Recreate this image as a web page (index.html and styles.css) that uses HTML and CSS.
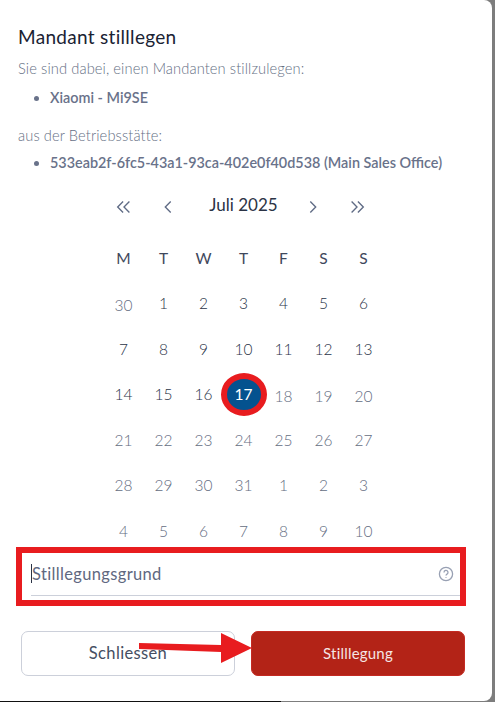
FILE: index.html
```html
<!DOCTYPE html>
<html lang="de">
<head>
  <meta charset="UTF-8" />
  <title>Mandant stilllegen</title>
  <link rel="stylesheet" href="styles.css">
</head>
<body>

<div class="dialog">
  <h2 class="title">Mandant stilllegen</h2>
  <p class="intro">Sie sind dabei, einen Mandanten stillzulegen:</p>
  <ul class="items items-first">
    <li>Xiaomi - Mi9SE</li>
  </ul>
  <p class="intro">aus der Betriebsstätte:</p>
  <ul class="items">
    <li>533eab2f-6fc5-43a1-93ca-402e0f40d538 (Main Sales Office)</li>
  </ul>

  <div class="calendar">
    <div class="cal-head">
      <svg class="nav" viewBox="0 0 20 20"><path d="M9 4 3 10l6 6M16 4l-6 6 6 6"/></svg>
      <svg class="nav" viewBox="0 0 20 20"><path d="M13 4 7 10l6 6"/></svg>
      <span class="month">Juli 2025</span>
      <svg class="nav" viewBox="0 0 20 20"><path d="m7 4 6 6-6 6"/></svg>
      <svg class="nav" viewBox="0 0 20 20"><path d="m4 4 6 6-6 6M11 4l6 6-6 6"/></svg>
    </div>
    <div class="cal-grid">
      <span class="wd">M</span><span class="wd">T</span><span class="wd">W</span><span class="wd">T</span><span class="wd">F</span><span class="wd">S</span><span class="wd">S</span>

      <span class="off low">30</span><span>1</span><span>2</span><span>3</span><span>4</span><span>5</span><span>6</span>
      <span>7</span><span>8</span><span>9</span><span>10</span><span>11</span><span>12</span><span>13</span>
      <span>14</span><span>15</span><span>16</span><span class="today"><b>17</b></span><span class="off low">18</span><span class="off low">19</span><span class="off low">20</span>
      <span class="off">21</span><span class="off">22</span><span class="off">23</span><span class="off">24</span><span class="off">25</span><span class="off">26</span><span class="off">27</span>
      <span class="off">28</span><span class="off">29</span><span class="off">30</span><span class="off">31</span><span class="off">1</span><span class="off">2</span><span class="off">3</span>
      <span class="off">4</span><span class="off">5</span><span class="off">6</span><span class="off">7</span><span class="off">8</span><span class="off">9</span><span class="off">10</span>
    </div>
  </div>

  <div class="reason">
    <div class="reason-line">
      <span class="caret"></span>
      <span class="reason-label">Stilllegungsgrund</span>
      <svg class="help" viewBox="0 0 16 16"><circle cx="8" cy="8" r="6.6"/><path d="M6 6.4a2 2 0 1 1 3 1.7c-.7.4-1 .8-1 1.5"/><path d="M8 11.3v.6"/></svg>
    </div>
  </div>

  <div class="buttons">
    <button class="btn btn-close">Schliessen</button>
    <button class="btn btn-main">Stilllegung</button>
  </div>

  <svg class="arrow" viewBox="0 0 113 30"><path d="M0 10 82 12V0l31 15-31 15V19L0 16z"/></svg>
</div>
<div class="edge"></div>

</body>
</html>
```

FILE: styles.css
```css
html, body {
  height: 100%;
}

body {
  margin: 0;
  background: #7d7d7d;
  font-family: "Lato", "Open Sans", sans-serif;
  overflow: hidden;
}

.dialog {
  position: relative;
  box-sizing: border-box;
  width: 492px;
  height: 701px;
  padding: 25px 19px 0 18px;
  background: #fff;
  border-radius: 0 8px 8px 0;
}

.edge {
  width: 281px;
  height: 1px;
  background: #111;
}

.title {
  margin: 0;
  font-size: 19px;
  line-height: 23px;
  font-weight: 400;
  color: #1a2233;
  letter-spacing: 0.3px;
}

.intro {
  margin: 10px 0 0;
  font-size: 14.7px;
  line-height: 18px;
  font-weight: 300;
  color: #667085;
  letter-spacing: 0.1px;
}

.title + .intro {
  margin-top: 11px;
}

.items {
  margin: 0;
  padding: 10px 0 9px 32px;
  font-size: 14.4px;
  line-height: 18px;
  font-weight: 600;
  color: #69728a;
}

.items-first {
  padding-top: 12px;
}

.calendar {
  margin-top: 9px;
}

.cal-head {
  display: grid;
  grid-template-columns: 44px 44px 101px 44px 44px;
  justify-content: center;
  justify-items: center;
  align-items: center;
  height: 28px;
  margin-left: -10px;
}

.nav {
  width: 18px;
  height: 18px;
  margin-top: 5px;
  fill: none;
  stroke: #5f6b85;
  stroke-width: 1.5;
}

.month {
  padding-left: 6px;
  font-size: 17px;
  color: #2b3345;
}

.cal-grid {
  display: grid;
  grid-template-columns: repeat(7, 40px);
  grid-auto-rows: 45.5px;
  justify-content: center;
  justify-items: center;
  align-items: center;
  margin: 17px 0 0 -4px;
  font-size: 15.5px;
  font-weight: 300;
  color: #2a3347;
}

.cal-grid .wd {
  font-weight: 400;
  color: #3f485c;
}

.cal-grid .off {
  color: #646d82;
}

.cal-grid .low {
  padding-top: 3px;
}

.today {
  display: flex;
  align-items: center;
  justify-content: center;
  box-sizing: border-box;
  width: 46px;
  height: 43px;
  background: #04528f;
  border: 6px solid #e81c1f;
  border-radius: 50%;
  color: #fff;
}

.today b {
  font-weight: 400;
}

.reason {
  box-sizing: border-box;
  width: 450px;
  height: 59px;
  margin: -7px 0 0 -2px;
  padding-left: 9px;
  border: 6px solid #e81c1f;
}

.reason-line {
  display: flex;
  align-items: center;
  box-sizing: border-box;
  height: 43px;
  padding-right: 6px;
  border-bottom: 1px solid #ccd0da;
}

.caret {
  width: 1px;
  height: 19px;
  background: #2b3345;
}

.reason-label {
  flex: 1;
  font-size: 16.5px;
  color: #5f6880;
  letter-spacing: 0.35px;
}

.help {
  width: 16px;
  height: 16px;
  fill: none;
  stroke: #98a0b3;
  stroke-width: 1.3;
}

.buttons {
  display: flex;
  gap: 16px;
  margin: 25px 0 0 3px;
}

.btn {
  width: 214px;
  height: 45px;
  border-radius: 7px;
  font-family: inherit;
  font-size: 15px;
}

.btn-close {
  background: #fff;
  border: 1px solid #ccd0da;
  color: #454e62;
  font-size: 16.5px;
  letter-spacing: 0.35px;
}

.btn-main {
  background: #b32317;
  border: 1px solid #c42a22;
  color: #f5e6e4;
  letter-spacing: 0.2px;
}

.arrow {
  position: absolute;
  left: 139px;
  top: 633px;
  width: 113px;
  height: 30px;
  fill: #e81c1f;
}
```
